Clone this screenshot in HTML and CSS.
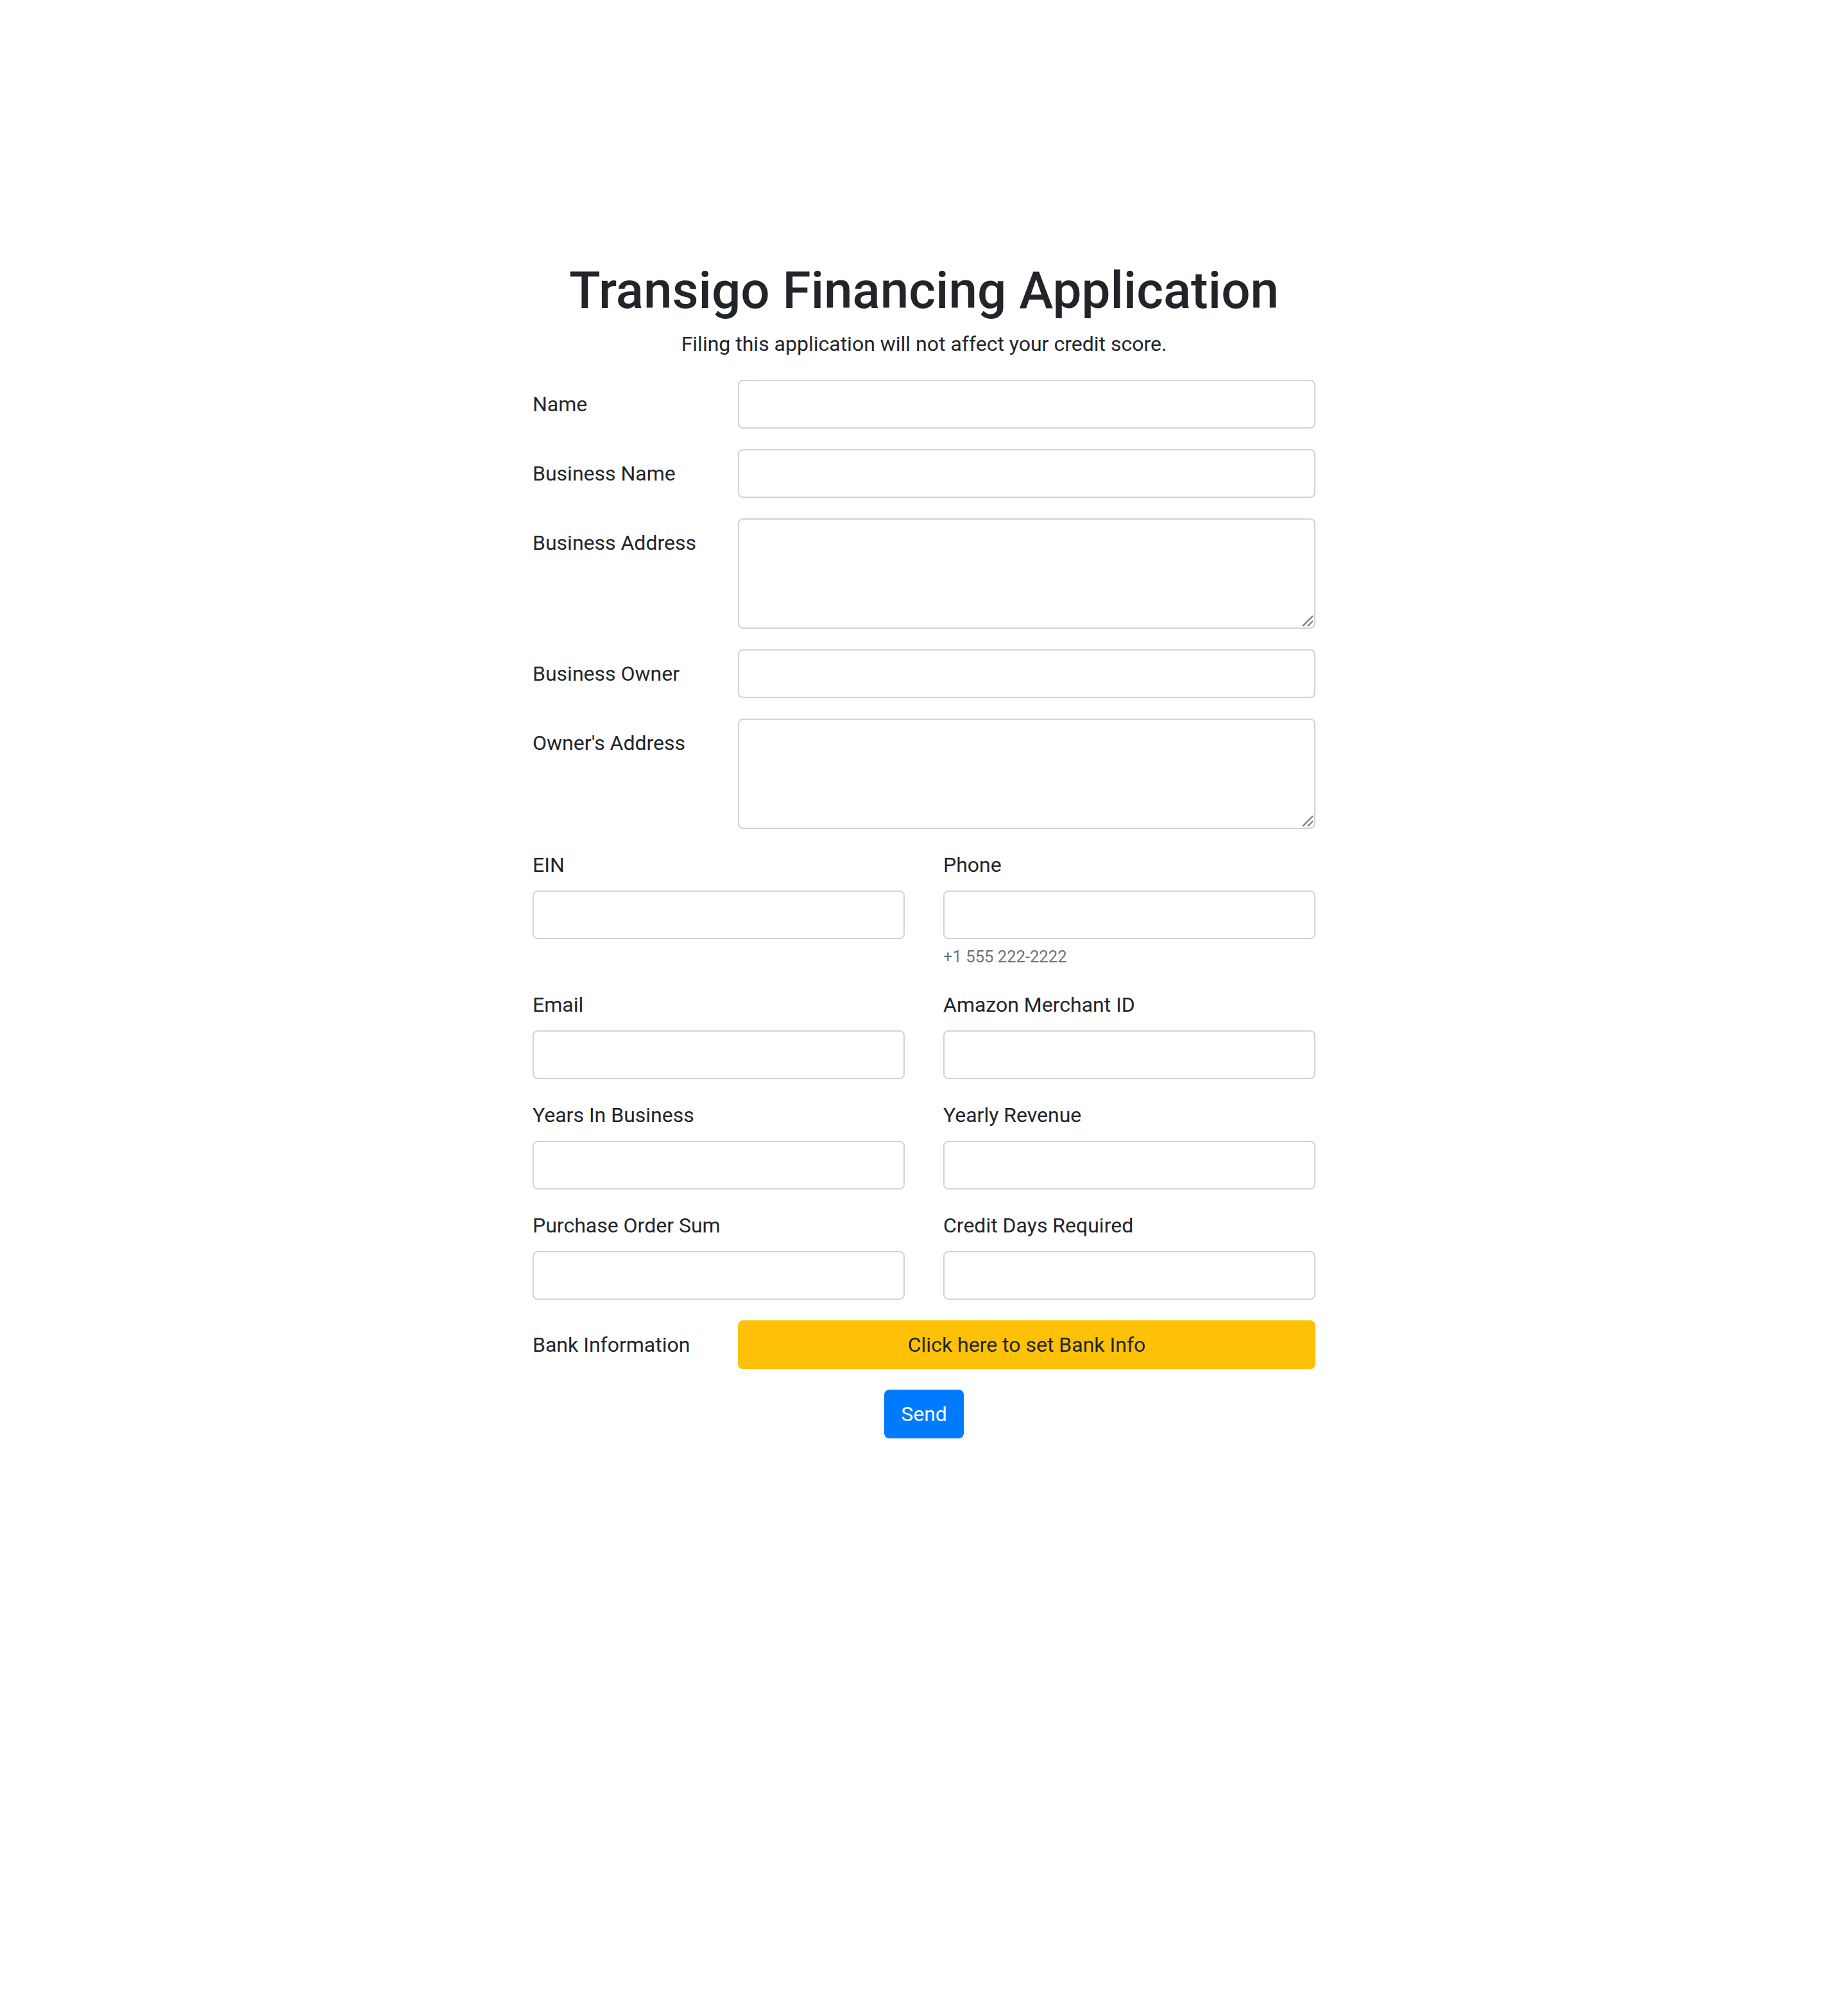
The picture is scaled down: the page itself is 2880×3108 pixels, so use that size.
FILE: index.html
```html
<!DOCTYPE html>
<html>
<head>
  <meta charset="UTF-8">
  <title>Transigo Financing Application</title>
  <link rel="stylesheet" href="styles.css">
</head>
<body>
  <div class="container">
    <h1 class="title">Transigo Financing Application</h1>
    <p class="lead-note">Filing this application will not affect your credit score.</p>

    <form class="apply-form" onsubmit="return false;">
      <div class="form-group row-inline">
        <label class="col-label" for="name">Name</label>
        <input class="form-control" id="name" type="text">
      </div>

      <div class="form-group row-inline">
        <label class="col-label" for="businessName">Business Name</label>
        <input class="form-control" id="businessName" type="text">
      </div>

      <div class="form-group row-inline">
        <label class="col-label" for="businessAddress">Business Address</label>
        <div class="area-wrap">
          <textarea class="form-control area" id="businessAddress" rows="3"></textarea>
          <svg class="grip" width="20" height="20" viewBox="0 0 20 20"><path d="M2 18L18 2M10 18L18 10"/></svg>
        </div>
      </div>

      <div class="form-group row-inline">
        <label class="col-label" for="businessOwner">Business Owner</label>
        <input class="form-control" id="businessOwner" type="text">
      </div>

      <div class="form-group row-inline">
        <label class="col-label" for="ownerAddress">Owner's Address</label>
        <div class="area-wrap">
          <textarea class="form-control area" id="ownerAddress" rows="3"></textarea>
          <svg class="grip" width="20" height="20" viewBox="0 0 20 20"><path d="M2 18L18 2M10 18L18 10"/></svg>
        </div>
      </div>

      <div class="row-split">
        <div class="form-group">
          <label class="top-label" for="ein">EIN</label>
          <input class="form-control" id="ein" type="text">
        </div>
        <div class="form-group">
          <label class="top-label" for="phone">Phone</label>
          <input class="form-control" id="phone" type="tel">
          <small class="form-text">+1 555 222-2222</small>
        </div>
      </div>

      <div class="row-split">
        <div class="form-group">
          <label class="top-label" for="email">Email</label>
          <input class="form-control" id="email" type="email">
        </div>
        <div class="form-group">
          <label class="top-label" for="merchantId">Amazon Merchant ID</label>
          <input class="form-control" id="merchantId" type="text">
        </div>
      </div>

      <div class="row-split">
        <div class="form-group">
          <label class="top-label" for="years">Years In Business</label>
          <input class="form-control" id="years" type="text">
        </div>
        <div class="form-group">
          <label class="top-label" for="revenue">Yearly Revenue</label>
          <input class="form-control" id="revenue" type="text">
        </div>
      </div>

      <div class="row-split">
        <div class="form-group">
          <label class="top-label" for="poSum">Purchase Order Sum</label>
          <input class="form-control" id="poSum" type="text">
        </div>
        <div class="form-group">
          <label class="top-label" for="creditDays">Credit Days Required</label>
          <input class="form-control" id="creditDays" type="text">
        </div>
      </div>

      <div class="form-group row-inline">
        <label class="col-label">Bank Information</label>
        <button type="button" class="btn btn-warning">Click here to set Bank Info</button>
      </div>

      <div class="actions">
        <button type="submit" class="btn btn-primary">Send</button>
      </div>
    </form>
  </div>
</body>
</html>
```

FILE: styles.css
```css
body {
  margin: 0;
  font-family: Roboto, "Liberation Sans", Arial, sans-serif;
  font-size: 32px;
  line-height: 1.5;
  color: #212529;
  background: #fff;
}

.container {
  width: 1220px;
  margin: 0 auto;
  padding-top: 405px;
}

.title {
  margin: 0 0 11px;
  font-size: 80px;
  font-weight: 500;
  line-height: 1.2;
  text-align: center;
}

.lead-note {
  margin: 0 0 32px;
  text-align: center;
}

.form-group {
  margin-bottom: 32px;
}

/* label on the left, field on the right */
.row-inline {
  display: grid;
  grid-template-columns: 260px 1fr;
  column-gap: 60px;
}

.col-label {
  padding-top: 14px;
  padding-bottom: 14px;
}

/* two fields side by side */
.row-split {
  display: grid;
  grid-template-columns: 1fr 1fr;
  column-gap: 60px;
}

.top-label {
  display: block;
  margin-bottom: 16px;
}

.form-control {
  display: block;
  box-sizing: border-box;
  width: 100%;
  height: 76px;
  padding: 12px 24px;
  font: inherit;
  color: #495057;
  background: #fff;
  border: 2px solid #ced4da;
  border-radius: 8px;
  outline: none;
}

.area-wrap {
  position: relative;
}

.area {
  height: 172px;
  resize: none;
}

.grip {
  position: absolute;
  right: 2px;
  bottom: 2px;
  fill: none;
  stroke: #6f6f6f;
  stroke-width: 2;
}

.form-text {
  display: block;
  margin-top: 8px;
  font-size: 25.6px;
  color: #6c757d;
}

.btn {
  box-sizing: border-box;
  height: 76px;
  padding: 12px 24px;
  font: inherit;
  border: 2px solid transparent;
  border-radius: 8px;
  cursor: pointer;
}

.btn-warning {
  width: 100%;
  color: #212529;
  background-color: #ffc107;
  border-color: #ffc107;
}

.btn-primary {
  color: #fff;
  background-color: #007bff;
  border-color: #007bff;
}

.actions {
  display: flex;
  justify-content: center;
}
```
